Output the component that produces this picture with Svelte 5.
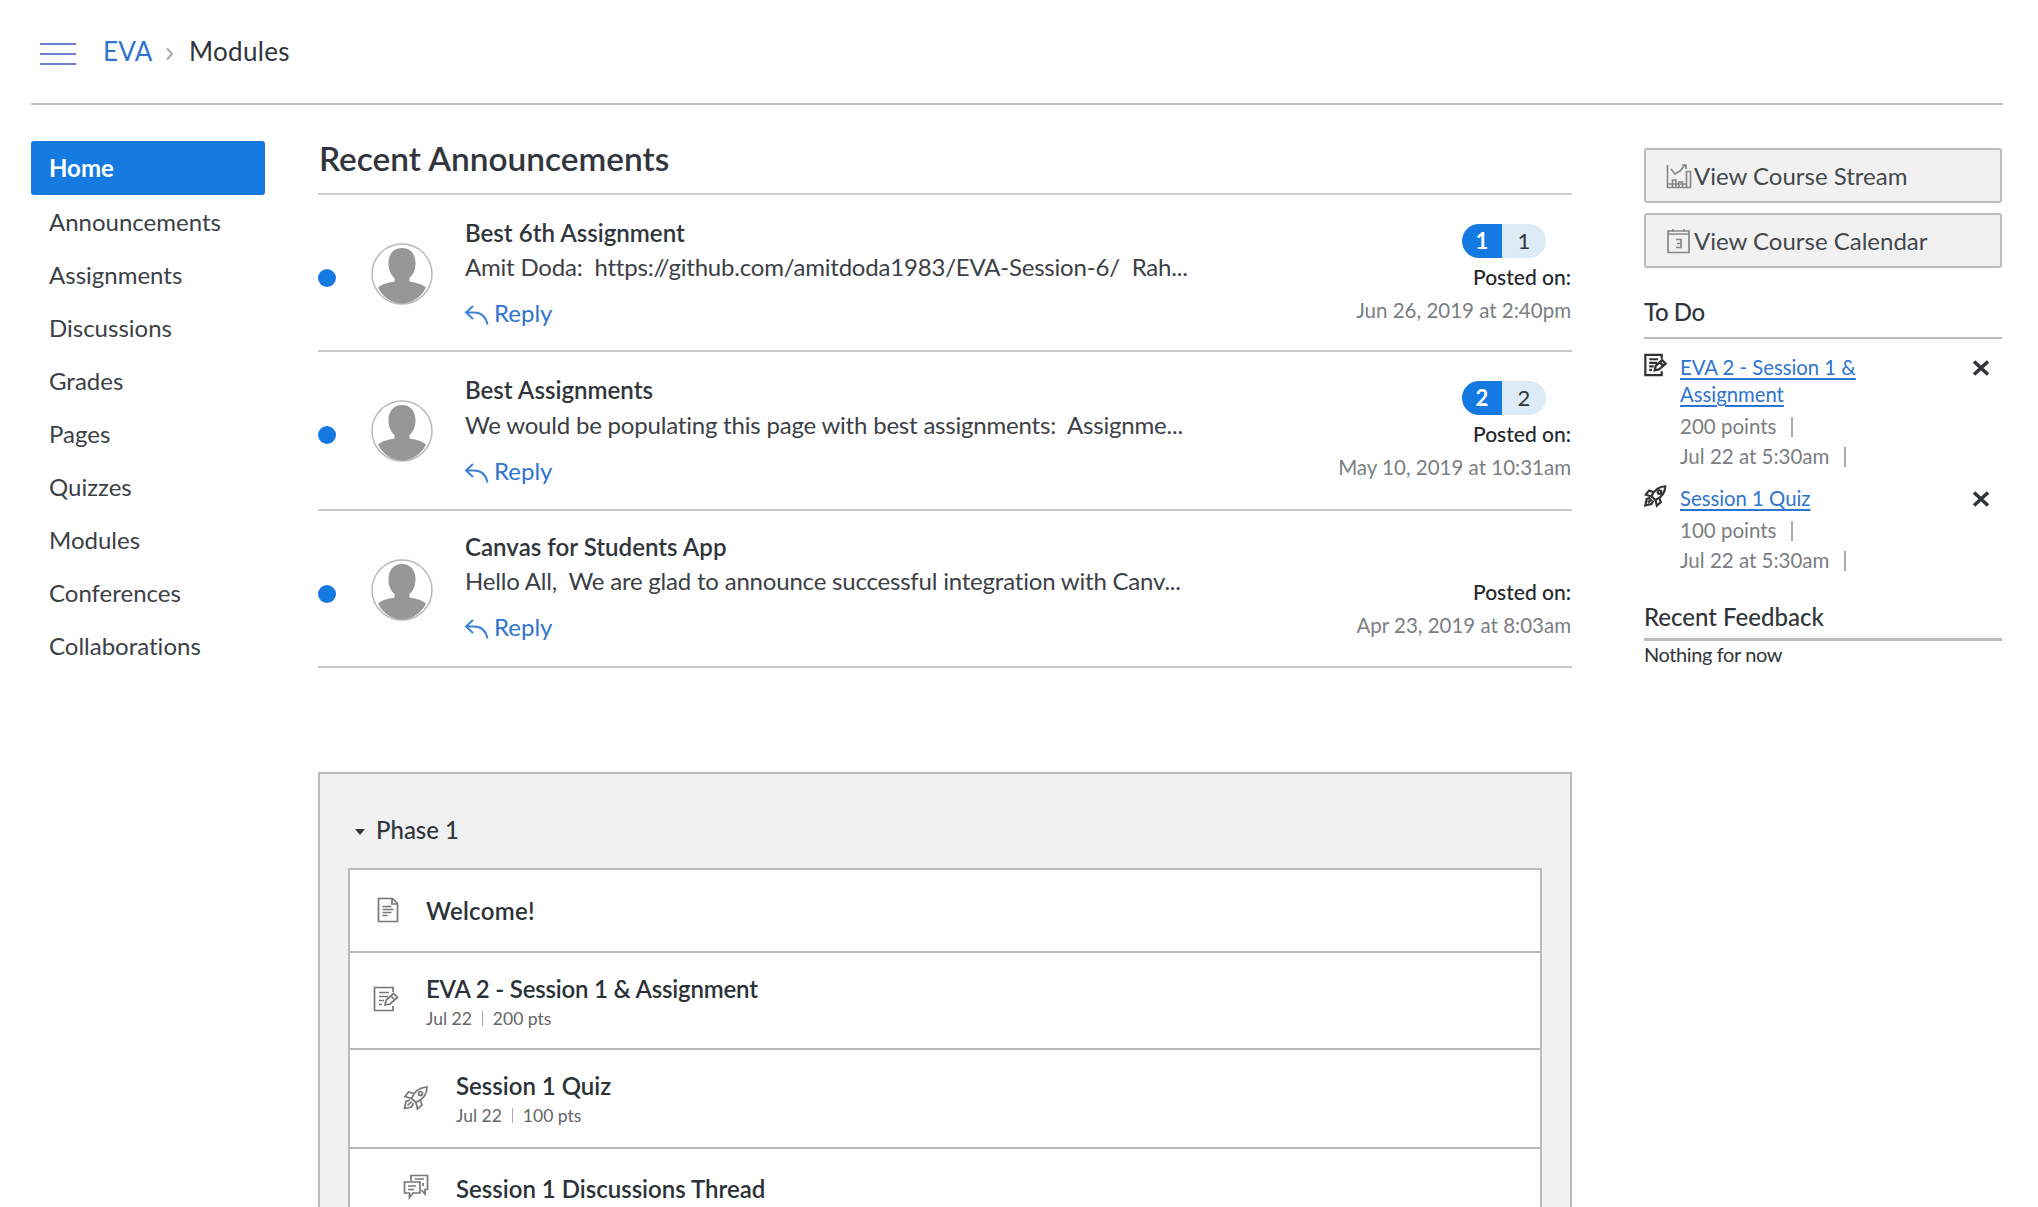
<script>
  const nav = ['Home', 'Announcements', 'Assignments', 'Discussions', 'Grades', 'Pages', 'Quizzes', 'Modules', 'Conferences', 'Collaborations'];
  const announcements = [
    { title: 'Best 6th Assignment', body: 'Amit Doda:\u00a0 https://github.com/amitdoda1983/EVA-Session-6/\u00a0 Rah...', date: 'Jun 26, 2019 at 2:40pm', count: 1 },
    { title: 'Best Assignments', body: 'We would be populating this page with best assignments:\u00a0 Assignme...', date: 'May 10, 2019 at 10:31am', count: 2 },
    { title: 'Canvas for Students App', body: 'Hello All,\u00a0 We are glad to announce successful integration with Canv...', date: 'Apr 23, 2019 at 8:03am', count: 0 }
  ];
  const todos = [
    { icon: 'assignment', title: 'EVA 2 - Session 1 & Assignment', points: 200, due: 'Jul 22 at 5:30am' },
    { icon: 'rocket', title: 'Session 1 Quiz', points: 100, due: 'Jul 22 at 5:30am' }
  ];
  const items = [
    { icon: 'page', kind: 'welcome', title: 'Welcome!' },
    { icon: 'assignment', kind: 'assignment', title: 'EVA 2 - Session 1 & Assignment', due: 'Jul 22', pts: '200 pts' },
    { icon: 'rocket', kind: 'quiz', title: 'Session 1 Quiz', due: 'Jul 22', pts: '100 pts' },
    { icon: 'discussion', kind: 'thread', title: 'Session 1 Discussions Thread' }
  ];
</script>

{#snippet icon(name)}
  <svg class="icon" viewBox="0 0 26 26" aria-hidden="true">
    {#if name === 'page'}
      <path d="M3.500 1.500h14l5 5v18h-19zM17 2v5h5" />
      <path d="M7.500 9.500h9M7.500 12.500h11M7.500 15.500h9M7.500 18.500h5" />
    {:else if name === 'assignment'}
      <path d="M20 6V1.500H1.500v23H20V20" />
      <path d="M6 6.500h10M6 10.500h9M6 14.500h5M6 18.500h3" />
      <path d="M12 19l1.200-5L20.500 7.500l4 4L17 18z M18 10l4 4" />
    {:else if name === 'rocket'}
      <path d="M8.500 13.500C11 7 16 2.500 24 2c0 7.500-4.500 12.500-11 15.500z" />
      <path d="M11 8.500L5.500 7 2 11.500l6.500 2M17 14.500l2 5.500-4.500 4-1.500-6.500" />
      <circle cx="17.500" cy="8.500" r="2" />
      <path d="M7 15l-4 1.500-1.500 7 7-1.500L10.500 18M4.500 20.500l4-4" />
    {:else if name === 'discussion'}
      <path d="M8 7V1.500h16.500v14H22v4.500l-3.500-4" />
      <path d="M1.500 8h15.500v11h-7L6.500 23.500V19h-5z" />
      <path d="M5 12h8M5 15.500h6M12 5h9M20 9v3" />
    {:else if name === 'stream'}
      <path d="M1.500 2v22.500h23V8.500h-4v16M6.500 24v-7h3.500v7M13 24v-5h3.500v5M1.500 21h19" />
      <path d="M5 6l4 5 5-3 5-6M16 2h4v4" />
    {:else if name === 'calendar'}
      <path d="M2 3h21v21.500H2zM2 6h21M7 1v3M18 1v3" />
      <path d="M10 11.500h5v8h-5M11 15.500h4" />
    {/if}
  </svg>
{/snippet}

<div class="page">
  <header>
    <svg class="menu" viewBox="0 0 36 24"><path d="M0 2h36M0 12h36M0 22h36" /></svg>
    <a class="crumb" href="#eva">EVA</a>
    <svg class="chevron" viewBox="0 0 10 14"><path d="M2 1.500l5 5.500-5 5.500" /></svg>
    <span class="current">Modules</span>
  </header>

  <div class="columns">
    <nav>
      {#each nav as label, i}
        <a href="#nav" class:active={i === 0}>{label}</a>
      {/each}
    </nav>

    <main>
      <h1>Recent Announcements</h1>
      {#each announcements as a}
        <article>
          <span class="dot"></span>
          <svg class="avatar" viewBox="0 0 62 62">
            <circle cx="31" cy="31" r="30" fill="#fff" stroke="#b9b9b9" stroke-width="1.500" />
            <path fill="#979797" d="M31 5c8.500 0 13.500 6 13.500 15.500C44.500 27 42 32 38.500 35v3.500c5 1 12 2 16.500 6C50.500 54 41 60.500 31 60.500S11.500 54 7 44.500c4.500-4 11.500-5 16.500-6V35c-3.500-3-6-8-6-14.500C17.500 11 22.500 5 31 5z" />
          </svg>
          <div class="text">
            <h2>{a.title}</h2>
            <p>{a.body}</p>
            <a class="reply" href="#reply">
              <svg viewBox="0 0 26 22"><path d="M9 2L2 8.500l7 6.500M2 8.500h8c7 0 12 4.500 13.500 12" /></svg>
              Reply
            </a>
          </div>
          <div class="meta">
            <div class="badge" class:hidden={!a.count}><b>{a.count || ''}</b><i>{a.count || ''}</i></div>
            <div class="posted">Posted on:</div>
            <time>{a.date}</time>
          </div>
        </article>
      {/each}

      <section class="module">
        <h2><span class="caret"></span>Phase 1</h2>
        <div class="items">
          {#each items as item}
            <div class="item {item.kind}">
              {@render icon(item.icon)}
              <div>
                <h3>{item.title}</h3>
                {#if item.due}<div class="sub"><span>{item.due}</span><span class="bar"></span><span>{item.pts}</span></div>{/if}
              </div>
            </div>
          {/each}
        </div>
      </section>
    </main>

    <aside>
      <button>{@render icon('stream')}View Course Stream</button>
      <button>{@render icon('calendar')}View Course Calendar</button>
      <h2 class="todo-head">To Do</h2>
      {#each todos as t}
        <div class="todo">
          {@render icon(t.icon)}
          <div class="todo-text">
            <a href="#todo">{t.title}</a>
            <div class="line">{t.points} points<span class="bar"></span></div>
            <div class="line">{t.due}<span class="bar"></span></div>
          </div>
          <svg class="close" viewBox="0 0 18 16"><path d="M2 1.500l14 13M16 1.500l-14 13" /></svg>
        </div>
      {/each}
      <h2 class="feedback-head">Recent Feedback</h2>
      <p class="nothing">Nothing for now</p>
    </aside>
  </div>
</div>

<style>
  :global(body) { background: #fefefe; }
  .page { box-sizing: border-box; height: 1207px; overflow: hidden; padding: 0 35px 0 31px; font-family: Lato, 'Liberation Sans', sans-serif; font-variant-ligatures: none; color: #30363b; }
  h1, h2, h3, p { margin: 0; font-weight: 600; }
  a { color: #2f74cf; text-decoration: none; }
  svg { display: block; flex: none; fill: none; }

  header { box-sizing: border-box; height: 105px; border-bottom: 2px solid #bdbdbd; display: flex; align-items: flex-start; padding: 36px 0 0 9px; font-size: 26px; line-height: 30px; letter-spacing: 0.3px; }
  .menu { width: 36px; height: 24px; margin: 6px 27px 0 0; stroke: #6b80cf; stroke-width: 2; }
  .crumb { width: 62px; }
  .chevron { width: 10px; height: 14px; margin: 11px 14px 0 0; stroke: #aaa; stroke-width: 2; }

  .columns { display: flex; }
  nav { width: 234px; padding-top: 36px; margin-right: 53px; flex: none; }
  nav a { display: block; height: 53px; line-height: 53px; padding-left: 18px; font-size: 24px; color: #3b4146; }
  nav a.active { background: #1479e0; color: #fff; font-weight: 700; border-radius: 3px; height: 54px; line-height: 54px; }

  main { width: 1254px; flex: none; padding-top: 33px; }
  h1 { font-size: 33.400px; line-height: 40px; height: 55px; padding-left: 1px; border-bottom: 2px solid #ccc; }
  article { display: flex; box-sizing: border-box; height: 157px; border-bottom: 2px solid #c8c8c8; }
  article:nth-of-type(2) { height: 159px; }
  .dot { width: 18px; height: 18px; border-radius: 50%; background: #1479e0; margin: 74px 35px 0 0; flex: none; }
  .avatar { width: 62px; height: 62px; margin: 48px 32px 0 0; }
  .text { flex: 1; padding-top: 22px; white-space: nowrap; }
  .text h2 { font-size: 24.100px; line-height: 32px; }
  .text p { font-size: 24px; line-height: 36px; letter-spacing: -0.2px; font-weight: 400; color: #3b4146; }
  .reply { display: flex; align-items: flex-start; font-size: 24px; line-height: 30px; margin-top: 13px; }
  article:nth-of-type(2) p { padding-top: 1px; }
  article:nth-of-type(3) .text { padding-top: 20px; }
  article:nth-of-type(3) .meta { padding-top: 28px; }
  .reply svg { width: 26px; height: 22px; margin: 6px 4px 0 -1px; stroke: #3f83d6; stroke-width: 2; }
  .meta { display: flex; flex-direction: column; align-items: flex-end; padding: 29px 1px 0 0; }
  .badge { display: flex; width: 84px; height: 34px; margin-right: 25px; border-radius: 17px; overflow: hidden; font-size: 22px; line-height: 34px; text-align: center; }
  .badge b { width: 40px; background: #1479e0; color: #fff; font-weight: 700; }
  .badge i { flex: 1; background: #dcebf6; font-style: normal; }
  .badge.hidden { visibility: hidden; }
  .posted { font-size: 21px; line-height: 28px; margin-top: 5px; color: #22272b; font-weight: 500; }
  time { font-size: 20.500px; line-height: 28px; margin-top: 5px; color: #7b7f83; }

  .module { box-sizing: border-box; margin-top: 104px; border: 2px solid #bbb; border-bottom: 0; background: #f1f1f1; padding: 0 28px; height: 440px; }
  .module h2 { display: flex; align-items: center; height: 94px; padding: 17px 0 0 7px; box-sizing: border-box; font-size: 24px; font-weight: 500; }
  .caret { border: 5px solid transparent; border-top: 6px solid #30363b; border-bottom: 0; margin: 5px 11px 0 0; }
  .items { border: 2px solid #bbb; border-bottom: 0; background: #fefefe; }
  .item { display: flex; align-items: flex-start; box-sizing: border-box; border-bottom: 2px solid #b8b8b8; }
  .item h3 { font-size: 24px; line-height: 30px; color: #2b3238; }
  .item .icon { color: #777; }
  .item.welcome { height: 83px; padding: 26px 0 0 25px; }
  .item.assignment { height: 97px; padding: 21px 0 0 23px; }
  .item.quiz { height: 99px; padding: 21px 0 0 53px; }
  .item.thread { height: 99px; padding: 25px 0 0 53px; }
  .icon { width: 26px; height: 26px; stroke: currentColor; stroke-width: 1.7; }
  .welcome .icon { margin: 1px 25px 0 0; }
  .welcome h3 { letter-spacing: 0.3px; }
  .assignment .icon { margin: 12px 27px 0 0; }
  .quiz .icon { margin: 14px 27px 0 0; }
  .thread .icon { margin: 0 27px 0 0; }
  .assignment h3 { letter-spacing: -0.2px; }
  .sub { display: flex; align-items: center; font-size: 17.500px; line-height: 29px; color: #666; }
  .sub .bar { width: 1px; height: 15px; background: #aaa; margin: 0 10px; }

  aside { width: 358px; margin-left: 72px; padding-top: 43px; }
  button { display: flex; align-items: center; width: 100%; height: 55px; margin: 0 0 10px; padding: 0 20px; box-sizing: border-box; border: 2px solid #bdbdbd; border-radius: 3px; background: #f1f1f1; font: 24px Lato, sans-serif; color: #43484c; }
  button .icon { margin-right: 2px; color: #888; }
  aside h2 { font-size: 24px; line-height: 30px; font-weight: 500; }
  .todo-head { margin-top: 29px; height: 42px; border-bottom: 2px solid #bbb; letter-spacing: -0.4px; box-sizing: border-box; }
  .todo { display: flex; align-items: flex-start; padding-top: 14px; font-size: 20.500px; }
  .todo-head + .todo { padding-top: 15px; }
  .todo .icon { width: 23px; height: 26px; margin: -2px 13px 0 0; color: #333; stroke-width: 2.5; }
  .todo-text { width: 186px; }
  .todo-text a { display: block; line-height: 27px; margin-bottom: 3px; font-size: 20.300px; text-decoration: underline; text-decoration-thickness: 2px; text-underline-offset: 3px; }
  .line { display: flex; align-items: center; line-height: 30px; color: #7b7f83; }
  .line .bar { width: 2px; height: 20px; background: #aaa; margin: 2px 0 0 15px; }
  .close { width: 18px; height: 16px; margin: 6px 0 0 106px; stroke: #30363b; stroke-width: 3.600; }
  .feedback-head { margin-top: 27px; height: 36px; border-bottom: 3px solid #bbb; }
  .nothing { font-size: 20px; line-height: 26px; font-weight: 400; letter-spacing: -0.4px; }
</style>
